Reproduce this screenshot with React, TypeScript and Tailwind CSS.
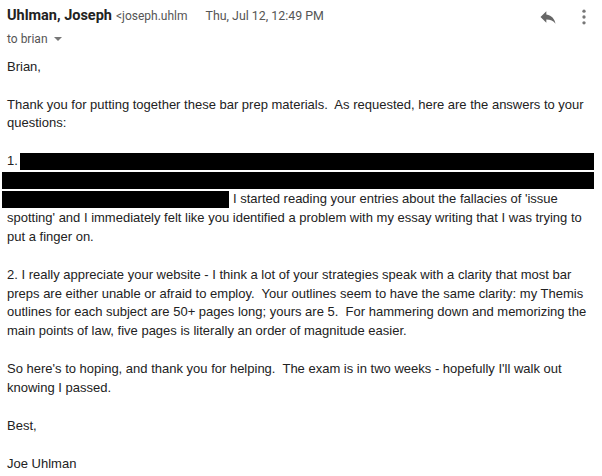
import React from "react";

function ReplyIcon() {
  return (
    <svg width="20" height="20" viewBox="0 0 24 24" className="block">
      <path d="M10 9V5l-7 7 7 7v-4.1c5 0 8.5 1.6 11 5.1-1-5-4-10-11-11z" fill="#666" />
    </svg>
  );
}

function DotsIcon() {
  return (
    <svg width="20" height="20" viewBox="0 0 24 24" className="block">
      <circle cx="12" cy="5" r="2" fill="#777" />
      <circle cx="12" cy="12" r="2" fill="#777" />
      <circle cx="12" cy="19" r="2" fill="#777" />
    </svg>
  );
}

export default function App() {
  return (
    <div className="w-[602px] h-[476px] bg-white overflow-hidden relative">
      <div className="flex items-start pl-[7px] pr-[8px] pt-[5px]">
        <div className="flex-1">
          <div className="flex items-baseline whitespace-nowrap" style={{ fontFamily: "Roboto, Arial, sans-serif" }}>
            <span className="text-[14.5px] font-bold text-[#222]">Uhlman, Joseph</span>
            <span className="text-[12px] text-[#555] ml-[4px]">&lt;joseph.uhlm</span>
            <span className="text-[12.4px] text-[#555] ml-[18px]">Thu, Jul 12, 12:49 PM</span>
          </div>
          <div className="flex items-center mt-[3px] text-[12px] text-[#555]" style={{ fontFamily: "Roboto, Arial, sans-serif" }}>
            <span>to brian</span>
            <svg width="10" height="6" viewBox="0 0 10 6" className="ml-[5px]">
              <path d="M1 1h8L5 5z" fill="#777" />
            </svg>
          </div>
        </div>
        <div className="flex items-center gap-[16px] pt-[2px]">
          <ReplyIcon />
          <DotsIcon />
        </div>
      </div>

      <div
        className="px-[7px] pr-[8px] mt-[10px] text-[13px] leading-[18.9px] text-[#222] whitespace-pre-wrap"
        style={{ fontFamily: '"Liberation Sans", Arial, sans-serif' }}
      >
        <p>Brian,</p>
        <p className="mt-[18.9px]">
          Thank you for putting together these bar prep materials.  As requested, here are the answers to your questions:
        </p>
        <div className="mt-[18.9px]">
          <div className="flex items-center h-[18.9px]">
            <span>1.</span>
            <span className="ml-[2px] flex-1 h-[17px] bg-black" />
          </div>
          <div className="flex items-center h-[18.9px] -ml-[5px]">
            <span className="flex-1 h-[17px] bg-black" />
          </div>
          <p>
            <span className="inline-block align-middle -ml-[5px] w-[227px] h-[17px] bg-black mr-[4px]" />
            I started reading your entries about the fallacies of 'issue spotting' and I immediately felt like you identified a problem with my essay writing that I was trying to put a finger on.
          </p>
        </div>
        <p className="mt-[18.9px]">
          2. I really appreciate your website - I think a lot of your strategies speak with a clarity that most bar preps are either unable or afraid to employ.  Your outlines seem to have the same clarity: my Themis outlines for each subject are 50+ pages long; yours are 5.  For hammering down and memorizing the main points of law, five pages is literally an order of magnitude easier.
        </p>
        <p className="mt-[18.9px]">
          So here's to hoping, and thank you for helping.  The exam is in two weeks - hopefully I'll walk out knowing I passed.
        </p>
        <p className="mt-[18.9px]">Best,</p>
        <p className="mt-[18.9px]">Joe Uhlman</p>
      </div>
    </div>
  );
}
